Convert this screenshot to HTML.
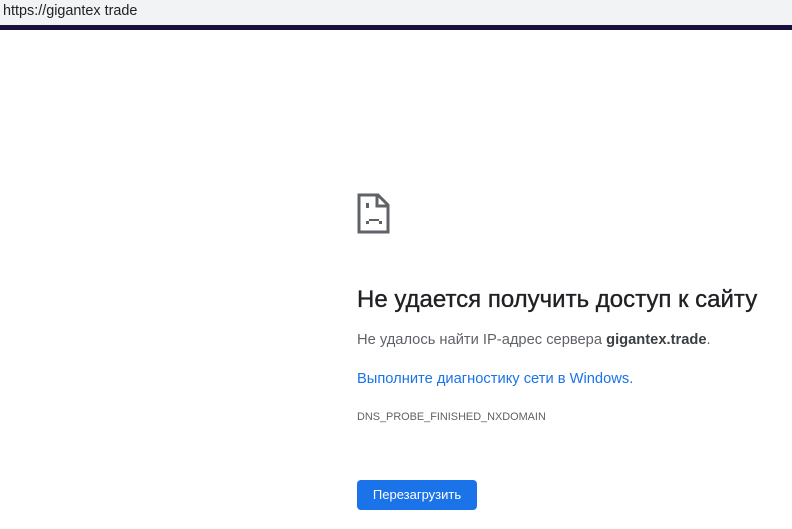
<!DOCTYPE html>
<html><head><meta charset="utf-8"><style>
html,body{margin:0;padding:0;width:792px;height:529px;overflow:hidden;background:#fff;font-family:"Liberation Sans",sans-serif;}
.bar{position:absolute;left:0;top:0;width:792px;height:25px;background:#f1f3f4;}
.bar span{position:absolute;left:3px;top:3px;font-size:14.4px;color:#222;}
.line{position:absolute;left:0;top:25px;width:792px;height:5px;background:#1a1040;}
.ic{position:absolute;left:357px;top:193px;}
h1{position:absolute;left:357px;top:286px;margin:0;font-size:24px;font-weight:normal;color:#202124;white-space:nowrap;-webkit-text-stroke:0.35px #202124;}
.p{position:absolute;left:357px;font-size:14.7px;color:#5f6368;white-space:nowrap;}
.p b{color:#3c4043;}
.l{color:#1a73e8;}
.code{position:absolute;left:357px;top:411px;font-size:10.9px;color:#5f6368;}
.btn{position:absolute;left:357px;top:480px;width:120px;height:30px;background:#1a73e8;border-radius:4px;color:#fff;font-size:13px;line-height:30px;text-align:center;}
</style></head><body>
<div class="bar"><span>https://gigantex trade</span></div>
<div class="line"></div>
<svg class="ic" width="34" height="42" viewBox="0 0 34 42">
<path d="M2 2H21L31 12V39H2Z" fill="none" stroke="#5f6368" stroke-width="3"/>
<path d="M20 2V13H31" fill="none" stroke="#5f6368" stroke-width="3"/>
<rect x="9" y="10" width="3" height="5" fill="#5f6368"/>
<rect x="12" y="26" width="10" height="2" fill="#5f6368"/>
<rect x="9" y="28" width="3" height="3" fill="#5f6368"/>
<rect x="22" y="28" width="3" height="3" fill="#5f6368"/>
</svg>
<h1>Не удается получить доступ к сайту</h1>
<div class="p" style="top:332px">Не удалось найти IP-адрес сервера <b>gigantex.trade</b>.</div>
<div class="p l" style="top:371px">Выполните диагностику сети в Windows.</div>
<div class="code">DNS_PROBE_FINISHED_NXDOMAIN</div>
<div class="btn">Перезагрузить</div>
</body></html>
